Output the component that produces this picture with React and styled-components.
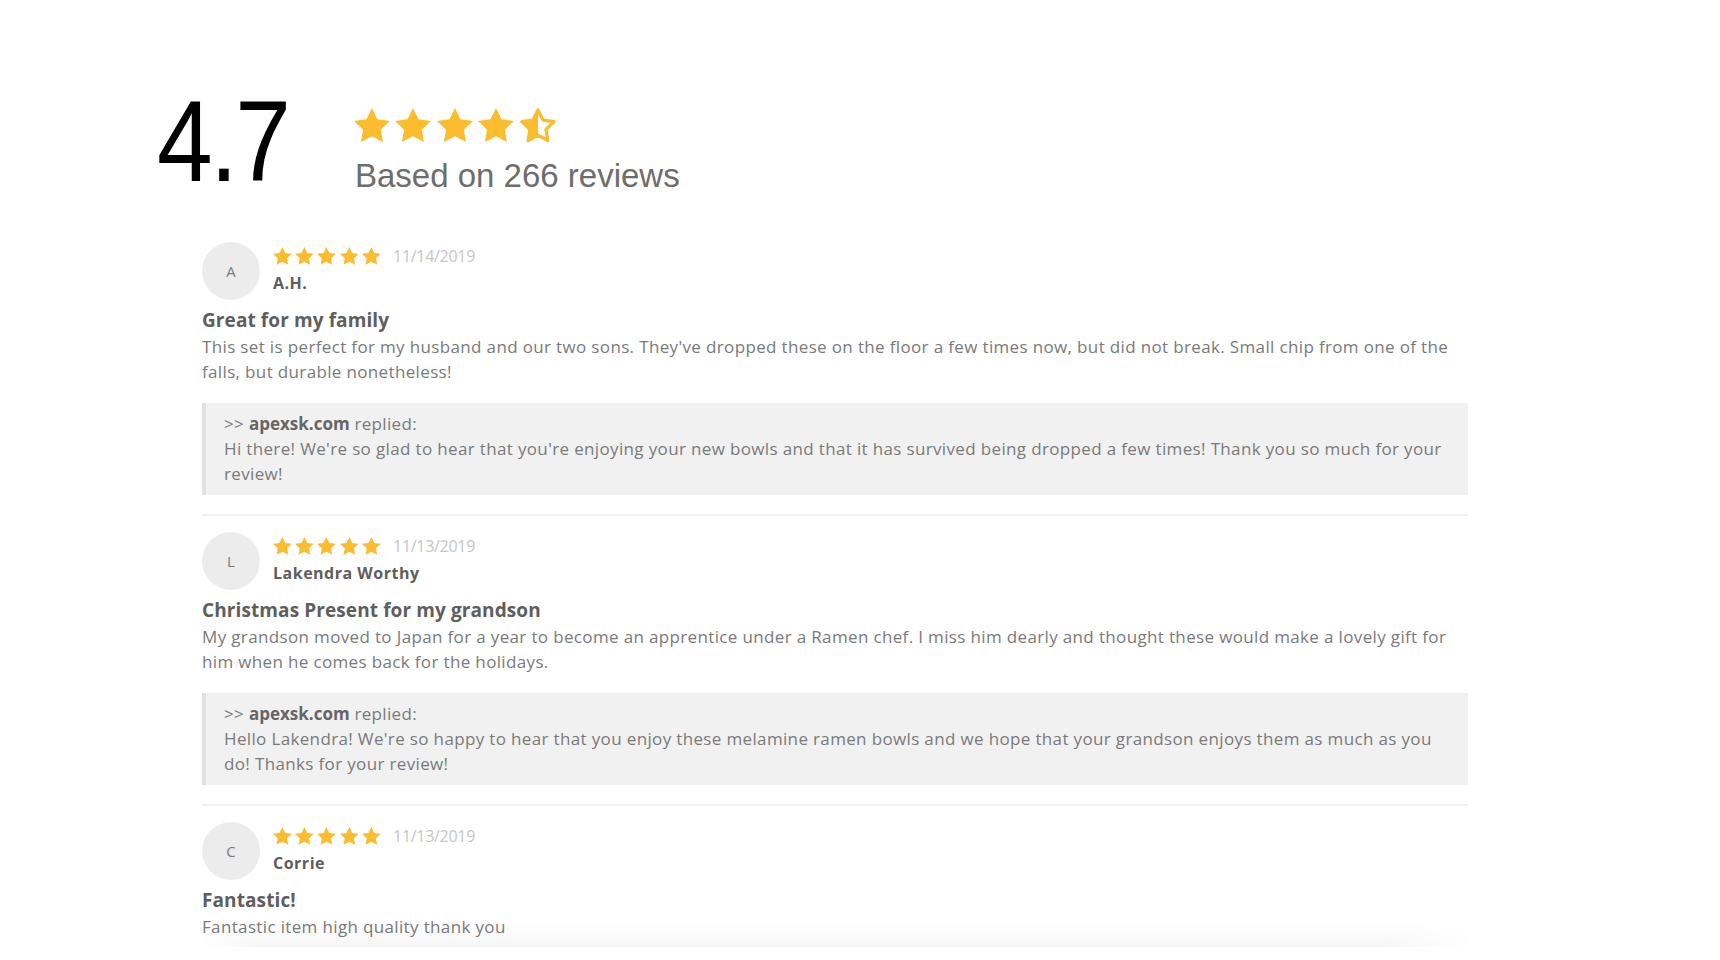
import React from "react";
import styled, { createGlobalStyle } from "styled-components";

const GOLD = "#fbbd2e";
const TEXT_FONT = `"Open Sans", "Noto Sans", sans-serif`;

const GlobalStyle = createGlobalStyle`
  html, body { margin: 0; padding: 0; background: #fff; }
  body { font-family: ${TEXT_FONT}; -webkit-font-smoothing: antialiased; }
`;

const Page = styled.div`
  position: relative;
  height: 960px;
  overflow: hidden;
  box-sizing: border-box;
  padding: 84px 0 0 157px;
`;

const Summary = styled.section`
  display: flex;
  align-items: flex-start;
`;

const Score = styled.div`
  font-family: "Liberation Sans", Arial, sans-serif;
  font-size: 115px;
  line-height: 1;
  color: #000;
  width: 197px;
  letter-spacing: -3px;
  transform: scaleX(0.87);
  transform-origin: left center;
`;

const SummaryInfo = styled.div`
  margin-top: 24px;
  display: flex;
  flex-direction: column;
  gap: 16px;
`;

const StarRow = styled.div`
  display: flex;
  align-items: center;
  gap: ${(p) => p.$gap}px;
`;

const BasedOn = styled.div`
  font-family: "Liberation Sans", Arial, sans-serif;
  font-size: 33px;
  line-height: 1;
  color: #6d6d6d;
  padding-left: 1px;
`;

const ReviewList = styled.div`
  margin: 43px 0 0 45px;
  width: 1266px;
`;

const Review = styled.article`
  padding-bottom: 19px;
  border-bottom: 2px solid #f1f1f1;
  margin-bottom: 16px;
`;

const Header = styled.div`
  display: flex;
  gap: 13px;
`;

const Avatar = styled.div`
  width: 58px;
  height: 58px;
  border-radius: 50%;
  background: #ececec;
  display: flex;
  align-items: center;
  justify-content: center;
  font-size: 15px;
  color: #7a7a7a;
  flex-shrink: 0;
`;

const Meta = styled.div`
  padding-top: 5px;
  display: flex;
  flex-direction: column;
  gap: 7px;
`;

const DateText = styled.span`
  margin-left: 9px;
  font-size: 16px;
  line-height: 18px;
  color: #c6c6c6;
  letter-spacing: -0.3px;
`;

const Name = styled.div`
  font-size: 16px;
  line-height: 22px;
  font-weight: 700;
  color: #5e5e5e;
  letter-spacing: 0.5px;
`;

const Title = styled.h3`
  margin: 7px 0 0;
  font-size: 19px;
  line-height: 26px;
  font-weight: 700;
  color: #5e5e5e;
  letter-spacing: 0.1px;
`;

const Body = styled.p`
  margin: 1px 0 0;
  font-size: 17px;
  line-height: 25px;
  color: #7a7a7a;
  letter-spacing: 0.35px;
`;

const Reply = styled.div`
  margin-top: 19px;
  background: #f1f1f1;
  border-left: 4px solid #e1e1e1;
  padding: 8px 22px 9px 18px;
  font-size: 17px;
  line-height: 25px;
  color: #7a7a7a;
  letter-spacing: 0.35px;
`;

const ReplyBy = styled.strong`
  font-weight: 700;
  color: #666;
  letter-spacing: 0;
`;

const BottomShade = styled.div`
  position: absolute;
  left: 200px;
  top: 922px;
  width: 1275px;
  height: 25px;
  background: linear-gradient(to bottom, rgba(0, 0, 0, 0), rgba(0, 0, 0, 0.035));
  -webkit-mask-image: linear-gradient(to right, transparent 0, #000 60px, #000 1180px, transparent 1275px);
  mask-image: linear-gradient(to right, transparent 0, #000 60px, #000 1180px, transparent 1275px);
  pointer-events: none;
`;

const BottomCover = styled.div`
  position: absolute;
  left: 0;
  right: 0;
  top: 947px;
  bottom: 0;
  background: #fff;
`;

const starPoints = (cx, cy, R, r) => {
  const pts = [];
  for (let i = 0; i < 10; i++) {
    const rad = i % 2 === 0 ? R : r;
    const a = -Math.PI / 2 + (i * Math.PI) / 5;
    pts.push(`${(cx + rad * Math.cos(a)).toFixed(2)},${(cy + rad * Math.sin(a)).toFixed(2)}`);
  }
  return pts.join(" ");
};

const FULL = starPoints(50, 52.5, 52.5, 26);
const OUTLINE = starPoints(50, 52.5, 47, 23.5);

let uid = 0;
const Star = ({ size, half }) => {
  const id = React.useMemo(() => `half-${++uid}`, []);
  return (
    <svg width={size * 1.04} height={size} viewBox="0 0 100 96" aria-hidden="true">
      {half ? (
        <>
          <defs>
            <clipPath id={id}>
              <rect x="0" y="0" width="50" height="100" />
            </clipPath>
          </defs>
          <polygon points={FULL} fill={GOLD} clipPath={`url(#${id})`} />
          <polygon
            points={OUTLINE}
            fill="none"
            stroke={GOLD}
            strokeWidth="9"
            strokeLinejoin="round"
          />
        </>
      ) : (
        <polygon points={FULL} fill={GOLD} />
      )}
    </svg>
  );
};

const Stars = ({ count = 5, half = false, size, gap }) => (
  <StarRow $gap={gap}>
    {Array.from({ length: count }).map((_, i) => (
      <Star key={i} size={size} half={half && i === count - 1} />
    ))}
  </StarRow>
);

const reviews = [
  {
    initial: "A",
    name: "A.H.",
    date: "11/14/2019",
    title: "Great for my family",
    body:
      "This set is perfect for my husband and our two sons. They've dropped these on the floor a few times now, but did not break. Small chip from one of the falls, but durable nonetheless!",
    reply:
      "Hi there! We're so glad to hear that you're enjoying your new bowls and that it has survived being dropped a few times! Thank you so much for your review!",
  },
  {
    initial: "L",
    name: "Lakendra Worthy",
    date: "11/13/2019",
    title: "Christmas Present for my grandson",
    body:
      "My grandson moved to Japan for a year to become an apprentice under a Ramen chef. I miss him dearly and thought these would make a lovely gift for him when he comes back for the holidays.",
    reply:
      "Hello Lakendra! We're so happy to hear that you enjoy these melamine ramen bowls and we hope that your grandson enjoys them as much as you do! Thanks for your review!",
  },
  {
    initial: "C",
    name: "Corrie",
    date: "11/13/2019",
    title: "Fantastic!",
    body: "Fantastic item high quality thank you",
  },
];

export default function App() {
  return (
    <>
      <GlobalStyle />
      <Page>
        <Summary>
          <Score>4.7</Score>
          <SummaryInfo>
            <Stars size={34.5} gap={5.5} half />
            <BasedOn>Based on 266 reviews</BasedOn>
          </SummaryInfo>
        </Summary>
        <ReviewList>
          {reviews.map((r) => (
            <Review key={r.name}>
              <Header>
                <Avatar>{r.initial}</Avatar>
                <Meta>
                  <StarRow $gap={3.5}>
                    <Stars size={18} gap={3.5} />
                    <DateText>{r.date}</DateText>
                  </StarRow>
                  <Name>{r.name}</Name>
                </Meta>
              </Header>
              <Title>{r.title}</Title>
              <Body>{r.body}</Body>
              {r.reply && (
                <Reply>
                  &gt;&gt; <ReplyBy>apexsk.com</ReplyBy> replied:
                  <br />
                  {r.reply}
                </Reply>
              )}
            </Review>
          ))}
        </ReviewList>
        <BottomShade />
        <BottomCover />
      </Page>
    </>
  );
}
